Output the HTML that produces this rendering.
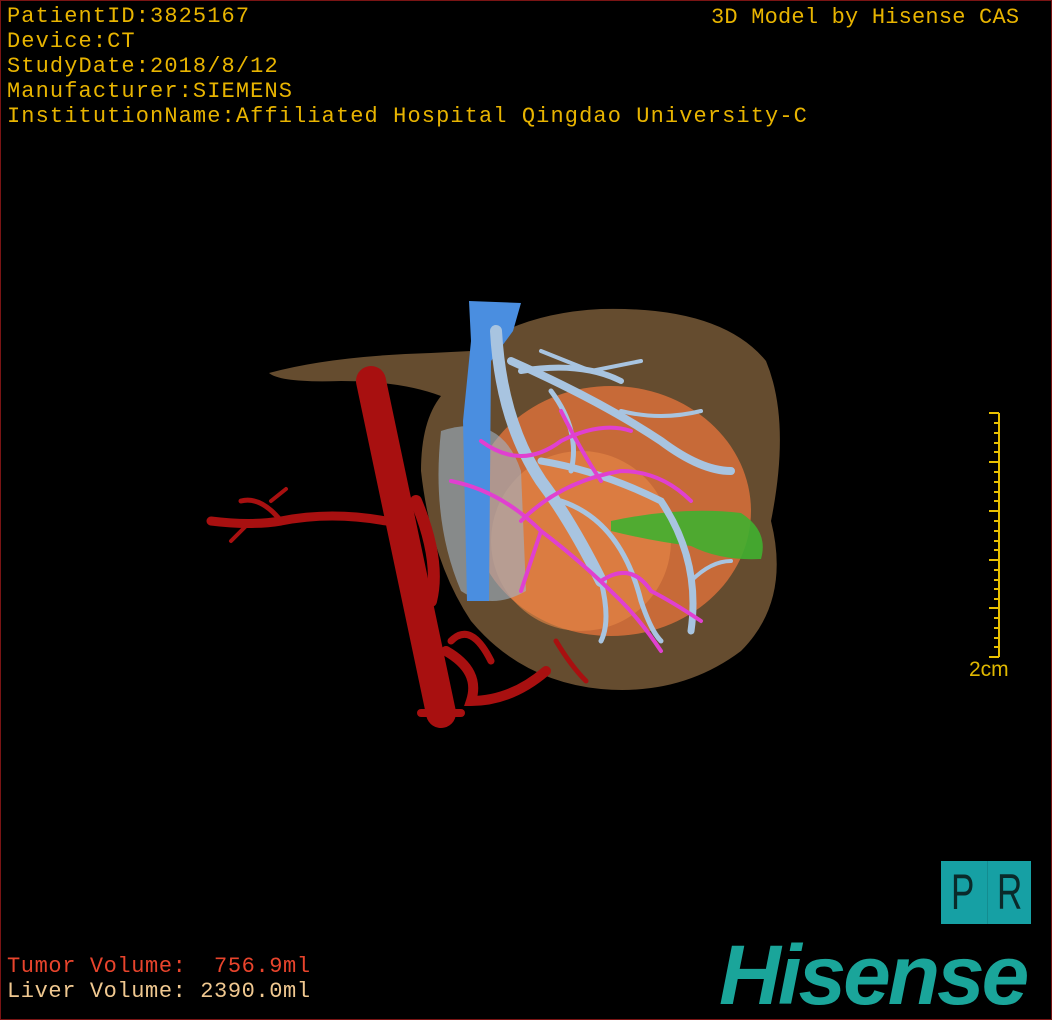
<!DOCTYPE html>
<html><head><meta charset="utf-8"><style>
html,body{margin:0;padding:0;background:#000;}
#f{position:relative;width:1050px;height:1018px;border:1px solid #7a1414;background:#000;overflow:hidden;font-family:"Liberation Mono",monospace;}
.t{position:absolute;font-size:22px;line-height:25px;color:#e8b400;letter-spacing:1.1px;white-space:pre;}
</style></head><body><div id="f">
<div class="t" style="left:6px;top:3px">PatientID:3825167<br>Device:CT<br>StudyDate:2018/8/12<br>Manufacturer:SIEMENS<br>InstitutionName:Affiliated Hospital Qingdao University-C</div>
<div class="t" style="left:710px;top:4px;letter-spacing:0.2px">3D Model by Hisense CAS</div>
<div class="t" style="left:6px;top:953px;color:#e8442c;letter-spacing:0.6px">Tumor Volume:  756.9ml</div>
<div class="t" style="left:6px;top:978px;color:#f0c890;letter-spacing:0.6px">Liver Volume: 2390.0ml</div>
<svg width="1050" height="1018" style="position:absolute;left:0;top:0">
<g stroke="#e8c000" stroke-width="2">
<line x1="998" y1="412" x2="998" y2="656"/>
<line x1="988" y1="412" x2="998" y2="412"/><line x1="988" y1="461" x2="998" y2="461"/><line x1="988" y1="510" x2="998" y2="510"/><line x1="988" y1="559" x2="998" y2="559"/><line x1="988" y1="607" x2="998" y2="607"/><line x1="988" y1="656" x2="998" y2="656"/>
<path d="M993 422h5M993 432h5M993 442h5M993 451h5M993 471h5M993 481h5M993 491h5M993 500h5M993 520h5M993 530h5M993 540h5M993 549h5M993 569h5M993 579h5M993 588h5M993 598h5M993 617h5M993 627h5M993 637h5M993 646h5"/>
</g>
<text x="968" y="675" font-family="Liberation Sans,sans-serif" font-size="21" fill="#e0b800">2cm</text>
<path d="M268 372 Q330 355 430 352 L470 350 Q520 312 600 308 Q720 305 765 360 Q790 420 770 520 Q790 600 740 650 Q680 695 600 688 Q520 680 470 620 Q430 560 420 470 Q420 420 440 395 Q400 380 340 380 Q280 382 268 372Z" fill="#705434" opacity="0.9"/>
<ellipse cx="610" cy="510" rx="140" ry="125" fill="#d8703a" opacity="0.85"/>
<ellipse cx="580" cy="540" rx="90" ry="90" fill="#e88848" opacity="0.6"/>
<path d="M440 430 Q500 410 520 470 L525 590 Q490 610 460 590 Q430 520 440 430Z" fill="#9fb4c8" opacity="0.6"/>
<path d="M468 300 L520 302 L512 330 L490 360 L488 600 L466 600 L462 420 L470 340Z" fill="#4a8ee0"/>
<path d="M610 520 Q680 505 740 512 Q768 530 760 558 Q720 560 690 545 Q650 540 610 530Z" fill="#40b030" opacity="0.9"/>
<g stroke="#a8c4e0" fill="none" stroke-linecap="round">
<path d="M495 330 Q500 420 540 480 Q570 520 600 580" stroke-width="12"/>
<path d="M510 360 Q600 400 660 440 Q700 470 730 470" stroke-width="8"/>
<path d="M520 370 Q580 360 620 380" stroke-width="6"/>
<path d="M540 460 Q600 470 660 500 Q700 560 690 630" stroke-width="7"/>
<path d="M560 500 Q620 520 640 600 Q650 630 660 640" stroke-width="5"/>
<path d="M600 580 Q610 620 600 640" stroke-width="5"/>
<path d="M540 350 L590 370 L640 360" stroke-width="4"/>
<path d="M620 410 Q660 420 700 410" stroke-width="4"/>
<path d="M690 580 Q710 560 730 560" stroke-width="4"/>
<path d="M550 390 Q580 430 570 470" stroke-width="5"/>
</g>
<g stroke="#e040d0" fill="none" stroke-width="4" stroke-linecap="round">
<path d="M450 480 Q500 490 540 530 Q580 560 620 600 Q640 620 660 650"/>
<path d="M480 440 Q520 470 560 440 Q600 420 630 430"/>
<path d="M520 520 Q560 480 620 470 Q660 470 690 500"/>
<path d="M540 530 L520 590"/>
<path d="M600 580 Q630 560 650 590 Q670 600 700 620"/>
<path d="M560 410 Q580 450 600 480"/>
</g>
<g stroke="#a81010" fill="none" stroke-linecap="round">
<path d="M370 380 L440 712" stroke-width="30"/>
<path d="M420 712 L460 712" stroke-width="8"/>
<path d="M385 520 Q330 510 280 520 Q250 525 210 520" stroke-width="9"/>
<path d="M280 520 Q260 495 240 500" stroke-width="5"/>
<path d="M250 520 L230 540" stroke-width="4"/>
<path d="M270 500 L285 488" stroke-width="4"/>
<path d="M415 500 Q440 560 430 600" stroke-width="12"/>
<path d="M445 650 Q480 670 470 700 Q510 700 545 670" stroke-width="10"/>
<path d="M450 640 Q470 620 490 660" stroke-width="7"/>
<path d="M555 640 Q570 665 585 680" stroke-width="5"/>
</g>
</svg>
<div style="position:absolute;left:940px;top:860px;width:90px;height:63px;background:#16a0a4;"></div>
<div style="position:absolute;left:986px;top:860px;width:1px;height:63px;background:#138c90;"></div>
<div style="position:absolute;left:950px;top:862px;font-family:'Liberation Sans',sans-serif;font-size:50px;color:#0a2a2a;transform:scaleX(0.7);transform-origin:left;">P</div>
<div style="position:absolute;left:996px;top:862px;font-family:'Liberation Sans',sans-serif;font-size:50px;color:#0a2a2a;transform:scaleX(0.7);transform-origin:left;">R</div>
<div style="position:absolute;left:718px;top:932px;font-family:'Liberation Sans',sans-serif;font-weight:bold;font-style:italic;font-size:84px;line-height:84px;color:#1aa59a;letter-spacing:-3px;transform:scaleX(1.02);transform-origin:left;">Hisense</div>
</div></body></html>
